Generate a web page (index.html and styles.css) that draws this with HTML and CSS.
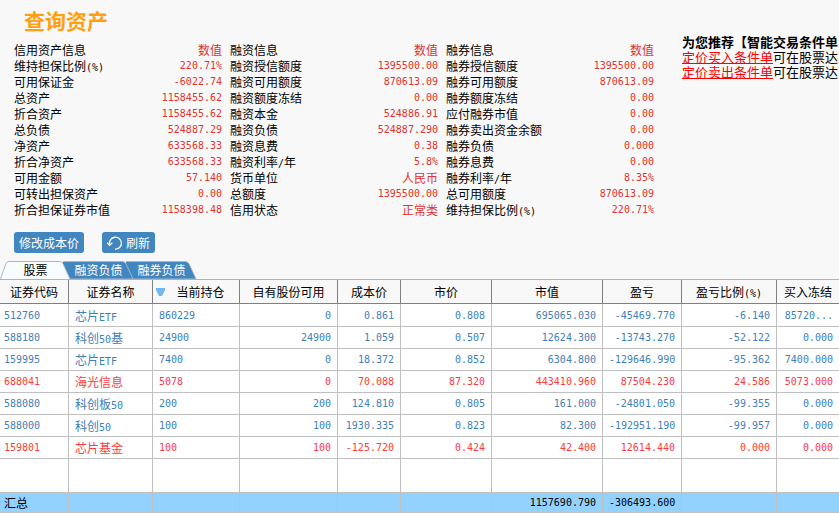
FILE: index.html
```html
<!DOCTYPE html>
<html lang="zh-CN">
<head>
    <meta charset="UTF-8">
    <meta name="viewport" content="width=device-width, initial-scale=1.0">
    <title>查询资产</title>
    <link rel="stylesheet" href="styles.css">
</head>
<body>
    <h1>查询资产</h1>

    <div class="summary">
        <table class="info">
            <tr><th>信用资产信息</th><td class="text">数值</td></tr>
            <tr><th>维持担保比例<span class="num">(%)</span></th><td>220.71%</td></tr>
            <tr><th>可用保证金</th><td>-6022.74</td></tr>
            <tr><th>总资产</th><td>1158455.62</td></tr>
            <tr><th>折合资产</th><td>1158455.62</td></tr>
            <tr><th>总负债</th><td>524887.29</td></tr>
            <tr><th>净资产</th><td>633568.33</td></tr>
            <tr><th>折合净资产</th><td>633568.33</td></tr>
            <tr><th>可用金额</th><td>57.140</td></tr>
            <tr><th>可转出担保资产</th><td>0.00</td></tr>
            <tr><th>折合担保证券市值</th><td>1158398.48</td></tr>
        </table>
        <table class="info">
            <tr><th>融资信息</th><td class="text">数值</td></tr>
            <tr><th>融资授信额度</th><td>1395500.00</td></tr>
            <tr><th>融资可用额度</th><td>870613.09</td></tr>
            <tr><th>融资额度冻结</th><td>0.00</td></tr>
            <tr><th>融资本金</th><td>524886.91</td></tr>
            <tr><th>融资负债</th><td>524887.290</td></tr>
            <tr><th>融资息费</th><td>0.38</td></tr>
            <tr><th>融资利率<span class="num">/</span>年</th><td>5.8%</td></tr>
            <tr><th>货币单位</th><td class="text">人民币</td></tr>
            <tr><th>总额度</th><td>1395500.00</td></tr>
            <tr><th>信用状态</th><td class="text">正常类</td></tr>
        </table>
        <table class="info">
            <tr><th>融券信息</th><td class="text">数值</td></tr>
            <tr><th>融券授信额度</th><td>1395500.00</td></tr>
            <tr><th>融券可用额度</th><td>870613.09</td></tr>
            <tr><th>融券额度冻结</th><td>0.00</td></tr>
            <tr><th>应付融券市值</th><td>0.00</td></tr>
            <tr><th>融券卖出资金余额</th><td>0.00</td></tr>
            <tr><th>融券负债</th><td>0.000</td></tr>
            <tr><th>融券息费</th><td>0.00</td></tr>
            <tr><th>融券利率<span class="num">/</span>年</th><td>8.35%</td></tr>
            <tr><th>总可用额度</th><td>870613.09</td></tr>
            <tr><th>维持担保比例<span class="num">(%)</span></th><td>220.71%</td></tr>
        </table>
        <div class="promo">
            <strong>为您推荐【智能交易条件单</strong>
            <p><a href="#">定价买入条件单</a>可在股票达到</p>
            <p><a href="#">定价卖出条件单</a>可在股票达到</p>
        </div>
    </div>

    <div class="actions">
        <button type="button" class="btn">修改成本价</button>
        <button type="button" class="btn">
            <svg width="16" height="16" viewBox="0 0 16 16" aria-hidden="true">
                <path d="M2.6 9.5A6 6 0 1 1 8 14.2" fill="none" stroke="#fff" stroke-width="1.3"/>
                <path d="M0 7.6L2.6 10.4L5.4 7.6" fill="none" stroke="#fff" stroke-width="1.3"/>
            </svg>
            刷新
        </button>
    </div>

    <div class="tabs" role="tablist">
        <button type="button" class="tab active" role="tab" aria-selected="true">
            <svg viewBox="0 0 72 18" preserveAspectRatio="none" aria-hidden="true"><path d="M0.5 18L5.5 4Q6.5 0.5 9 0.5H60Q63 0.5 64 3L71 18"/></svg>
            <span>股票</span>
        </button>
        <button type="button" class="tab" role="tab" aria-selected="false">
            <svg viewBox="0 0 72 18" preserveAspectRatio="none" aria-hidden="true"><path d="M0 0.5H60Q63 0.5 64 3L71 18H0"/></svg>
            <span>融资负债</span>
        </button>
        <button type="button" class="tab" role="tab" aria-selected="false">
            <svg viewBox="0 0 72 18" preserveAspectRatio="none" aria-hidden="true"><path d="M0 0.5H60Q63 0.5 64 3L71 18H0"/></svg>
            <span>融券负债</span>
        </button>
    </div>

    <table class="holdings">
        <colgroup>
            <col class="c-code"><col class="c-name"><col class="c-pos"><col class="c-avail"><col class="c-cost">
            <col class="c-price"><col class="c-value"><col class="c-profit"><col class="c-rate"><col>
        </colgroup>
        <thead>
            <tr>
                <th>证券代码</th>
                <th>证券名称</th>
                <th><svg class="sort" width="9" height="8" viewBox="0 0 9 8" aria-hidden="true"><path d="M0 0H9V2L6 8H3L0 2Z" fill="#6fb8f0"/></svg>当前持仓</th>
                <th>自有股份可用</th>
                <th>成本价</th>
                <th>市价</th>
                <th>市值</th>
                <th>盈亏</th>
                <th>盈亏比例<span class="num">(%)</span></th>
                <th>买入冻结</th>
            </tr>
        </thead>
        <tbody>
            <tr><td>512760</td><td>芯片<span class="num">ETF</span></td><td>860229</td><td>0</td><td>0.861</td><td>0.808</td><td>695065.030</td><td>-45469.770</td><td>-6.140</td><td>85720...</td></tr>
            <tr><td>588180</td><td>科创<span class="num">50</span>基</td><td>24900</td><td>24900</td><td>1.059</td><td>0.507</td><td>12624.300</td><td>-13743.270</td><td>-52.122</td><td>0.000</td></tr>
            <tr><td>159995</td><td>芯片<span class="num">ETF</span></td><td>7400</td><td>0</td><td>18.372</td><td>0.852</td><td>6304.800</td><td>-129646.990</td><td>-95.362</td><td>7400.000</td></tr>
            <tr class="up"><td>688041</td><td>海光信息</td><td>5078</td><td>0</td><td>70.088</td><td>87.320</td><td>443410.960</td><td>87504.230</td><td>24.586</td><td>5073.000</td></tr>
            <tr><td>588080</td><td>科创板<span class="num">50</span></td><td>200</td><td>200</td><td>124.810</td><td>0.805</td><td>161.000</td><td>-24801.050</td><td>-99.355</td><td>0.000</td></tr>
            <tr><td>588000</td><td>科创<span class="num">50</span></td><td>100</td><td>100</td><td>1930.335</td><td>0.823</td><td>82.300</td><td>-192951.190</td><td>-99.957</td><td>0.000</td></tr>
            <tr class="up"><td>159801</td><td>芯片基金</td><td>100</td><td>100</td><td>-125.720</td><td>0.424</td><td>42.400</td><td>12614.440</td><td>0.000</td><td>0.000</td></tr>
            <tr class="blank"><td></td><td></td><td></td><td></td><td></td><td></td><td></td><td></td><td></td><td></td></tr>
        </tbody>
        <tfoot>
            <tr><th>汇总</th><td></td><td></td><td></td><td></td><td></td><td>1157690.790</td><td>-306493.600</td><td></td><td></td></tr>
        </tfoot>
    </table>
</body>
</html>
```
FILE: styles.css
```css
body {
    margin: 0;
    background-color: #f8f8f8;
    color: #000;
    font-family: "Noto Sans CJK SC", sans-serif;
    font-size: 12px;
    line-height: 16px;
}
h1 {
    margin: 0;
    padding: 7px 0 1px 24px;
    color: #ff9f0f;
    font-size: 21px;
    font-weight: bold;
    line-height: 26px;
}
table {
    border-spacing: 0;
}
th {
    font-weight: normal;
    text-align: left;
}
.num,
.info td,
.holdings td {
    font-family: "DejaVu Sans Mono", "Noto Sans CJK SC", monospace;
    font-size: 10px;
}
.num {
    line-height: 10px;
}

/* summary */
.summary {
    display: flex;
    align-items: flex-start;
    gap: 8px;
    padding-left: 14px;
    overflow: hidden;
}
.info {
    flex: 0 0 208px;
    margin-top: 8px;
}
.info th,
.info td {
    height: 16px;
    padding: 0;
    line-height: 16px;
    vertical-align: middle;
    white-space: nowrap;
}
.info td {
    color: #dd3333;
    text-align: right;
}
.info td.text {
    font-family: "Noto Sans CJK SC", sans-serif;
    font-size: 12px;
}
.promo {
    flex: 1;
    min-width: 0;
    margin-left: 20px;
    font-size: 13px;
    line-height: 15px;
    white-space: nowrap;
}
.promo strong {
    display: block;
}
.promo p {
    margin: 0;
}
.promo a {
    color: #ff0000;
}

/* buttons */
.actions {
    display: flex;
    gap: 18px;
    padding: 14px 14px 8px;
}
.btn {
    display: flex;
    align-items: center;
    gap: 3px;
    height: 21px;
    padding: 0 5px;
    border: none;
    border-radius: 3px;
    background-color: #4186be;
    color: #fff;
    font-family: inherit;
    font-size: 12px;
    cursor: pointer;
}
.btn:hover {
    background-color: #36749f;
}

/* tabs */
.tabs {
    display: flex;
    border-bottom: 1px solid #a5b5c5;
}
.tab {
    position: relative;
    width: 71px;
    height: 18px;
    margin-left: -8px;
    padding: 0;
    border: none;
    background: none;
    color: #fff;
    font-family: inherit;
    font-size: 12px;
    line-height: 18px;
    cursor: pointer;
}
.tab:nth-child(1) {
    z-index: 3;
    margin-left: 0;
}
.tab:nth-child(2) {
    z-index: 2;
}
.tab svg {
    position: absolute;
    top: 0;
    left: 0;
    width: 100%;
    height: 100%;
    fill: #4186be;
    stroke: #a5b5c5;
}
.tab span {
    position: relative;
}
.tab.active {
    color: #000;
}
.tab.active svg {
    fill: #f8fcff;
}

/* holdings */
.holdings {
    width: 100%;
    table-layout: fixed;
    background-color: #fff;
}
.c-code { width: 69px; }
.c-name { width: 84px; }
.c-pos { width: 87px; }
.c-avail { width: 98px; }
.c-cost { width: 63px; }
.c-price { width: 91px; }
.c-value { width: 111px; }
.c-profit { width: 79px; }
.c-rate { width: 95px; }
.holdings th,
.holdings td {
    box-sizing: border-box;
    height: 22px;
    padding: 0 6px;
    border-right: 1px solid #c0c0c0;
    border-bottom: 1px solid #c0c0c0;
    line-height: 16px;
    vertical-align: middle;
    white-space: nowrap;
}
.holdings th:last-child,
.holdings td:last-child {
    border-right: none;
}
.holdings thead th {
    height: 24px;
    padding: 0 3px;
    border-color: #808080;
    background-color: #f8f8f8;
    text-align: center;
}
.holdings td {
    color: #3f80b8;
    text-align: right;
}
.holdings td:first-child,
.holdings tfoot th {
    padding-left: 4px;
    text-align: left;
}
.holdings tbody td:nth-child(2) {
    font-family: "Noto Sans CJK SC", sans-serif;
    font-size: 12px;
    text-align: left;
}
.holdings td:nth-child(3) {
    text-align: left;
}
.holdings tbody tr:first-child td {
    height: 23px;
    padding-top: 1px;
}
.holdings .up td {
    color: #fa3c3c;
}
.holdings .blank td {
    height: 34px;
}
.holdings tfoot th,
.holdings tfoot td {
    height: 20px;
    background-color: #93d1ff;
    color: #000;
}
.sort {
    float: left;
    margin-top: 4px;
}
```
